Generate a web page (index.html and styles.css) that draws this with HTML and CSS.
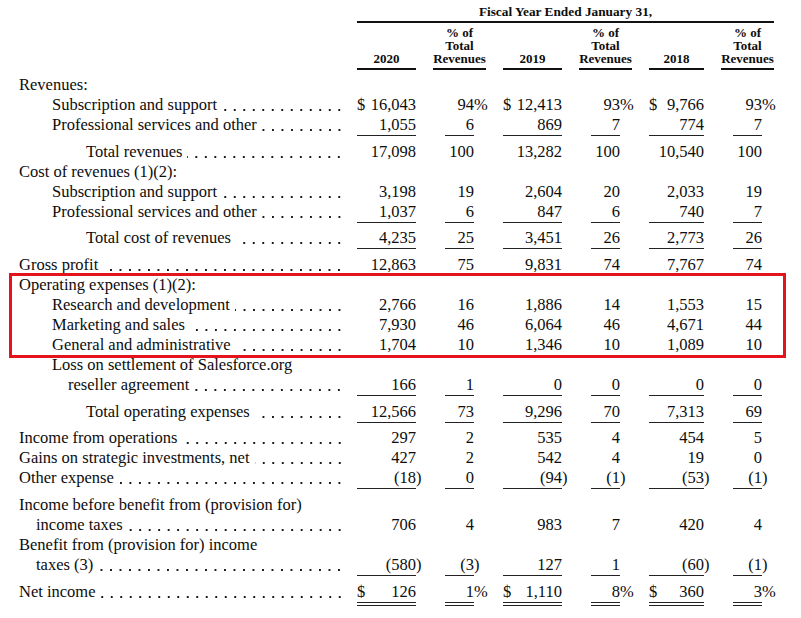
FILE: index.html
```html
<!DOCTYPE html>
<html lang="en">
<head>
    <meta charset="UTF-8">
    <title>Consolidated Statements of Operations</title>
    <link rel="stylesheet" href="styles.css">
</head>
<body>
<div class="sheet">
    <div class="row head-fy">
        <div class="fy">Fiscal Year Ended January 31,</div>
    </div>
    <div class="row head-cols">
        <div class="label"></div>
        <div class="hd">2020</div>
        <div class="hd pct"><span>% of</span><span>Total</span><span>Revenues</span></div>
        <div class="hd">2019</div>
        <div class="hd pct"><span>% of</span><span>Total</span><span>Revenues</span></div>
        <div class="hd">2018</div>
        <div class="hd pct"><span>% of</span><span>Total</span><span>Revenues</span></div>
    </div>

    <div class="body">
        <div class="row first"><div class="label in0">Revenues:</div></div>
        <div class="row">
            <div class="label in1"><span>Subscription and support</span><i class="dots"></i></div>
            <div class="num"><span class="cur">$</span>16,043</div>
            <div class="num">94<span class="hang">%</span></div>
            <div class="num"><span class="cur">$</span>12,413</div>
            <div class="num">93<span class="hang">%</span></div>
            <div class="num"><span class="cur">$</span>9,766</div>
            <div class="num">93<span class="hang">%</span></div>
        </div>
        <div class="row ul">
            <div class="label in1"><span>Professional services and other</span><i class="dots"></i></div>
            <div class="num">1,055</div><div class="num">6</div>
            <div class="num">869</div><div class="num">7</div>
            <div class="num">774</div><div class="num">7</div>
        </div>
        <div class="row">
            <div class="label in2"><span>Total revenues</span><i class="dots"></i></div>
            <div class="num">17,098</div><div class="num">100</div>
            <div class="num">13,282</div><div class="num">100</div>
            <div class="num">10,540</div><div class="num">100</div>
        </div>
        <div class="row"><div class="label in0">Cost of revenues (1)(2):</div></div>
        <div class="row">
            <div class="label in1"><span>Subscription and support</span><i class="dots"></i></div>
            <div class="num">3,198</div><div class="num">19</div>
            <div class="num">2,604</div><div class="num">20</div>
            <div class="num">2,033</div><div class="num">19</div>
        </div>
        <div class="row ul">
            <div class="label in1"><span>Professional services and other</span><i class="dots"></i></div>
            <div class="num">1,037</div><div class="num">6</div>
            <div class="num">847</div><div class="num">6</div>
            <div class="num">740</div><div class="num">7</div>
        </div>
        <div class="row ul">
            <div class="label in2"><span>Total cost of revenues</span><i class="dots"></i></div>
            <div class="num">4,235</div><div class="num">25</div>
            <div class="num">3,451</div><div class="num">26</div>
            <div class="num">2,773</div><div class="num">26</div>
        </div>
        <div class="row">
            <div class="label in0"><span>Gross profit</span><i class="dots"></i></div>
            <div class="num">12,863</div><div class="num">75</div>
            <div class="num">9,831</div><div class="num">74</div>
            <div class="num">7,767</div><div class="num">74</div>
        </div>

        <div class="highlight">
            <div class="row"><div class="label in0">Operating expenses (1)(2):</div></div>
            <div class="row">
                <div class="label in1"><span>Research and development</span><i class="dots"></i></div>
                <div class="num">2,766</div><div class="num">16</div>
                <div class="num">1,886</div><div class="num">14</div>
                <div class="num">1,553</div><div class="num">15</div>
            </div>
            <div class="row">
                <div class="label in1"><span>Marketing and sales</span><i class="dots"></i></div>
                <div class="num">7,930</div><div class="num">46</div>
                <div class="num">6,064</div><div class="num">46</div>
                <div class="num">4,671</div><div class="num">44</div>
            </div>
            <div class="row">
                <div class="label in1"><span>General and administrative</span><i class="dots"></i></div>
                <div class="num">1,704</div><div class="num">10</div>
                <div class="num">1,346</div><div class="num">10</div>
                <div class="num">1,089</div><div class="num">10</div>
            </div>
        </div>

        <div class="row"><div class="label in1">Loss on settlement of Salesforce.org</div></div>
        <div class="row ul">
            <div class="label in1b"><span>reseller agreement</span><i class="dots"></i></div>
            <div class="num">166</div><div class="num">1</div>
            <div class="num">0</div><div class="num">0</div>
            <div class="num">0</div><div class="num">0</div>
        </div>
        <div class="row ul">
            <div class="label in2"><span>Total operating expenses</span><i class="dots"></i></div>
            <div class="num">12,566</div><div class="num">73</div>
            <div class="num">9,296</div><div class="num">70</div>
            <div class="num">7,313</div><div class="num">69</div>
        </div>
        <div class="row">
            <div class="label in0"><span>Income from operations</span><i class="dots"></i></div>
            <div class="num">297</div><div class="num">2</div>
            <div class="num">535</div><div class="num">4</div>
            <div class="num">454</div><div class="num">5</div>
        </div>
        <div class="row">
            <div class="label in0"><span>Gains on strategic investments, net</span><i class="dots"></i></div>
            <div class="num">427</div><div class="num">2</div>
            <div class="num">542</div><div class="num">4</div>
            <div class="num">19</div><div class="num">0</div>
        </div>
        <div class="row ul">
            <div class="label in0"><span>Other expense</span><i class="dots"></i></div>
            <div class="num">(18<span class="hang">)</span></div><div class="num">0</div>
            <div class="num">(94<span class="hang">)</span></div><div class="num">(1<span class="hang">)</span></div>
            <div class="num">(53<span class="hang">)</span></div><div class="num">(1<span class="hang">)</span></div>
        </div>
        <div class="row"><div class="label in0">Income before benefit from (provision for)</div></div>
        <div class="row">
            <div class="label in0b"><span>income taxes</span><i class="dots"></i></div>
            <div class="num">706</div><div class="num">4</div>
            <div class="num">983</div><div class="num">7</div>
            <div class="num">420</div><div class="num">4</div>
        </div>
        <div class="row"><div class="label in0">Benefit from (provision for) income</div></div>
        <div class="row ul">
            <div class="label in0b"><span>taxes (3)</span><i class="dots"></i></div>
            <div class="num">(580<span class="hang">)</span></div><div class="num">(3<span class="hang">)</span></div>
            <div class="num">127</div><div class="num">1</div>
            <div class="num">(60<span class="hang">)</span></div><div class="num">(1<span class="hang">)</span></div>
        </div>
        <div class="row dbl">
            <div class="label in0"><span>Net income</span><i class="dots"></i></div>
            <div class="num"><span class="cur">$</span>126</div>
            <div class="num">1<span class="hang">%</span></div>
            <div class="num"><span class="cur">$</span>1,110</div>
            <div class="num">8<span class="hang">%</span></div>
            <div class="num"><span class="cur">$</span>360</div>
            <div class="num">3<span class="hang">%</span></div>
        </div>
    </div>
</div>
</body>
</html>
```

FILE: styles.css
```css
body {
    margin: 0;
    background: #fff;
    color: #0d0d0d;
    font-family: "Liberation Serif", "Times New Roman", serif;
}
.sheet {
    width: 801px;
}
.row {
    display: grid;
    grid-template-columns: 328px 59px 29px 59px 29px 55px 29px;
    column-gap: 29px;
}

/* header */
.head-fy {
    padding-top: 3px;
}
.fy {
    grid-column: 2 / -1;
    margin-right: -12px;
    text-align: center;
    font-weight: bold;
    font-size: 13.3px;
    line-height: 18px;
    border-bottom: 2px solid #111;
}
.head-cols {
    align-items: end;
}
.hd {
    display: flex;
    flex-direction: column;
    align-items: center;
    font-weight: bold;
    font-size: 13px;
    line-height: 13px;
    padding: 3px 0 3px;
    border-bottom: 2px solid #111;
}
.hd span {
    height: 13px;
    overflow: visible;
}
.hd.pct {
    margin: 0 -12px;
}

/* body rows */
.body .row.first {
    margin-top: 5px;
}
.label {
    display: flex;
    font-size: 16.5px;
    line-height: 20px;
    white-space: nowrap;
    margin-right: -16px;
}
.in0 { padding-left: 19px; }
.in0b { padding-left: 36px; }
.in1 { padding-left: 52px; }
.in1b { padding-left: 68px; }
.in2 { padding-left: 86px; }
.dots {
    flex: 1;
    margin-left: 5px;
    background-image: radial-gradient(circle, #1a1a1a 0.9px, transparent 1.3px);
    background-size: 9.5px 4px;
    background-position: right 0 top 13px;
    background-repeat: repeat-x;
}
.num {
    display: flex;
    justify-content: flex-end;
    font-size: 16.5px;
    line-height: 20px;
    white-space: nowrap;
}
.cur {
    margin-right: auto;
}
.hang {
    flex: none;
    width: 0;
}
.ul {
    margin-bottom: 5.7px;
}
.ul .num {
    border-bottom: 1px solid #222;
}
.dbl .num {
    border-bottom: 4px double #222;
}

/* annotation box drawn over the operating expense rows */
.highlight {
    position: relative;
}
.highlight::after {
    content: "";
    position: absolute;
    top: -2px;
    bottom: -3px;
    left: 9px;
    right: 15px;
    border: 3px solid #e3141b;
}
```
